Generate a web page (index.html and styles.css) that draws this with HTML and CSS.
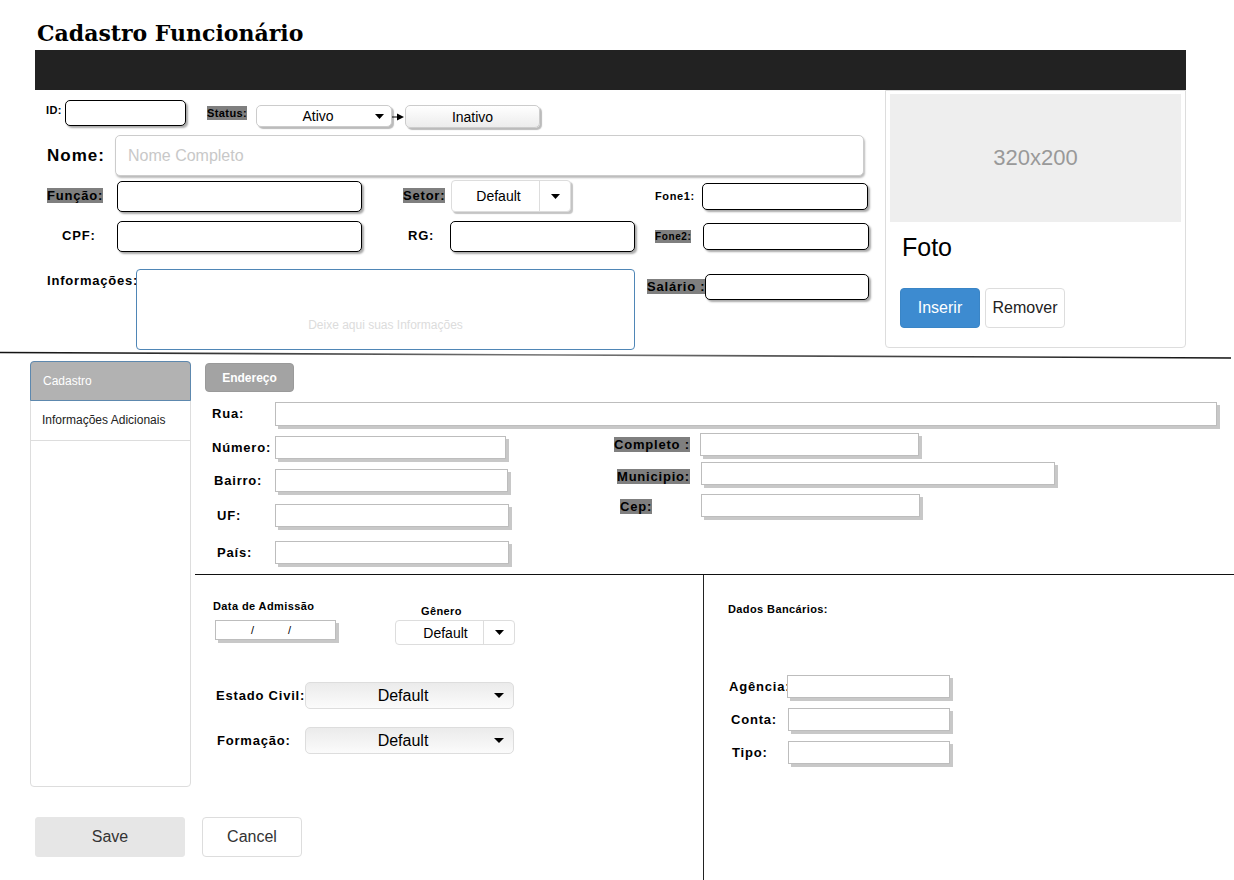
FILE: index.html
```html
<!DOCTYPE html>
<html lang="pt-BR">
<head>
<meta charset="utf-8">
<title>Cadastro Funcionário</title>
<link rel="stylesheet" href="styles.css">
</head>
<body>
<h1 class="title">Cadastro Funcionário</h1>
<div class="topbar"></div>

<div class="top">
  <form class="form">
    <div class="row r1">
      <label class="lb sm lb-id">ID:</label>
      <input class="bi in-id" type="text">
      <label class="lb sm lb-status"><span class="hl hl-tall">Status:</span></label>
      <div class="dd-ativo"><span class="dd-text">Ativo</span><svg class="caret" width="9" height="5" viewBox="0 0 9 5"><path d="M0 0h9L4.5 5z"/></svg></div>
      <svg class="conn" width="13" height="10" viewBox="0 0 13 10"><path d="M0 5h7" stroke="#000" stroke-width="1"/><path d="M5 1.5l7 3.5-7 3.5z" fill="#000"/></svg>
      <button type="button" class="btn-inativo">Inativo</button>
    </div>

    <div class="row r2">
      <label class="lb lb-nome">Nome:</label>
      <input class="in-nome" type="text" placeholder="Nome Completo">
    </div>

    <div class="row r3">
      <label class="lb md lb-funcao"><span class="hl">Função:</span></label>
      <input class="bi in-funcao" type="text">
      <label class="lb md lb-setor"><span class="hl">Setor:</span></label>
      <div class="dd-setor"><span class="dd-main">Default</span><span class="dd-btn"><svg class="caret" width="9" height="5" viewBox="0 0 9 5"><path d="M0 0h9L4.5 5z"/></svg></span></div>
      <label class="lb sm narrow lb-fone1">Fone1:</label>
      <input class="bi in-fone1" type="text">
    </div>

    <div class="row r4">
      <label class="lb md lb-cpf">CPF:</label>
      <input class="bi in-cpf" type="text">
      <label class="lb md lb-rg">RG:</label>
      <input class="bi in-rg" type="text">
      <label class="lb xs narrow lb-fone2"><span class="hl hl-tall">Fone2:</span></label>
      <input class="bi in-fone2" type="text">
    </div>

    <div class="row r5">
      <label class="lb md lb-info">Informações:</label>
      <textarea class="ta-info" placeholder="Deixe aqui suas Informações"></textarea>
      <label class="lb md lb-sal"><span class="hl">Salário :</span></label>
      <input class="bi in-sal" type="text">
    </div>
  </form>

  <aside class="card">
    <div class="ph">320x200</div>
    <div class="caption">Foto</div>
    <div class="card-btns">
      <button type="button" class="btn-ins">Inserir</button>
      <button type="button" class="btn-rem">Remover</button>
    </div>
  </aside>
</div>

<svg class="sep" width="1234" height="9" viewBox="0 0 1234 9">
  <defs>
    <linearGradient id="sepg" x1="0" x2="1" y1="0" y2="0">
      <stop offset="0" stop-color="#111"/>
      <stop offset="0.45" stop-color="#777"/>
      <stop offset="1" stop-color="#111"/>
    </linearGradient>
  </defs>
  <path d="M0 2.5L1231 8" stroke="url(#sepg)" stroke-width="1.6" fill="none"/>
</svg>

<div class="bottom">
  <div class="leftcol">
    <nav class="side">
      <div class="side-item active">Cadastro</div>
      <div class="side-item">Informações Adicionais</div>
    </nav>
    <div class="actions">
      <button type="button" class="btn-save">Save</button>
      <button type="button" class="btn-cancel">Cancel</button>
    </div>
  </div>

  <div class="content">
    <button type="button" class="tab">Endereço</button>

    <div class="row rua">
      <label class="lb md lb-rua">Rua:</label>
      <input class="wi in-rua" type="text">
    </div>

    <div class="addr">
      <div class="addr-l">
        <div class="row a-num">
          <label class="lb md lb-num">Número:</label>
          <input class="wi in-num" type="text">
        </div>
        <div class="row a-bai">
          <label class="lb md lb-bai">Bairro:</label>
          <input class="wi in-bai" type="text">
        </div>
        <div class="row a-uf">
          <label class="lb md lb-uf">UF:</label>
          <input class="wi in-uf" type="text">
        </div>
        <div class="row a-pais">
          <label class="lb md lb-pais">País:</label>
          <input class="wi in-pais" type="text">
        </div>
      </div>
      <div class="addr-r">
        <div class="row a-comp">
          <label class="lb md lb-comp"><span class="hl">Completo :</span></label>
          <input class="wi in-comp" type="text">
        </div>
        <div class="row a-mun">
          <label class="lb md lb-mun"><span class="hl">Municipio:</span></label>
          <input class="wi in-mun" type="text">
        </div>
        <div class="row a-cep">
          <label class="lb md lb-cep"><span class="hl">Cep:</span></label>
          <input class="wi in-cep" type="text">
        </div>
      </div>
    </div>

    <div class="lower">
      <div class="lower-l">
        <div class="row dg">
          <div class="g-data">
            <div class="lb sm">Data de Admissão</div>
            <div class="wi date"><span>/</span><span>/</span></div>
          </div>
          <div class="g-gen">
            <div class="lb sm lb-gen">Gênero</div>
            <div class="dd-gen"><span class="dd-main">Default</span><span class="dd-btn"><svg class="caret" width="9" height="5" viewBox="0 0 9 5"><path d="M0 0h9L4.5 5z"/></svg></span></div>
          </div>
        </div>
        <div class="row r-est">
          <label class="lb md lb-est">Estado Civil:</label>
          <div class="dd-wide"><span class="dd-text">Default</span><svg class="caret" width="10" height="5" viewBox="0 0 10 5"><path d="M0 0h10L5 5z"/></svg></div>
        </div>
        <div class="row r-form">
          <label class="lb md lb-form">Formação:</label>
          <div class="dd-wide"><span class="dd-text">Default</span><svg class="caret" width="10" height="5" viewBox="0 0 10 5"><path d="M0 0h10L5 5z"/></svg></div>
        </div>
      </div>

      <div class="lower-r">
        <div class="lb sm lb-banco">Dados Bancários:</div>
        <div class="row b-ag">
          <label class="lb md lb-ag">Agência:</label>
          <input class="wi in-ag" type="text">
        </div>
        <div class="row b-ct">
          <label class="lb md lb-ct">Conta:</label>
          <input class="wi in-ct" type="text">
        </div>
        <div class="row b-tp">
          <label class="lb md lb-tp">Tipo:</label>
          <input class="wi in-tp" type="text">
        </div>
      </div>
    </div>
  </div>
</div>
</body>
</html>
```

FILE: styles.css
```css
* { box-sizing: border-box; }

body {
  margin: 0;
  width: 1234px;
  height: 880px;
  overflow: hidden;
  background: #fff;
  color: #000;
  font-family: "Liberation Sans", Arial, sans-serif;
}

input, textarea, button {
  font-family: inherit;
  margin: 0;
  outline: none;
  flex: none;
  display: block;
}

/* ---------- header ---------- */
.title {
  margin: 0;
  padding: 23px 0 6px 37px;
  font: bold 22px/21px "DejaVu Serif", "Liberation Serif", serif;
  color: #000;
}

.topbar {
  margin-left: 35px;
  width: 1151px;
  height: 40px;
  background: #222;
}

/* ---------- generic ---------- */
.row { display: flex; align-items: center; }

.lb {
  flex: none;
  font-weight: bold;
  white-space: nowrap;
}
.sm { font-size: 11px; line-height: 13px; letter-spacing: .4px; }
.xs { font-size: 10px; line-height: 13px; letter-spacing: .3px; }
.md { font-size: 13px; line-height: 16px; letter-spacing: .8px; }
.narrow { font-family: "Liberation Sans Narrow", "Liberation Sans", Arial, sans-serif; letter-spacing: .6px; }
.hl { background: #7f7f7f; }
.hl-tall { padding: 1px 0; }

.bi {
  border: 1px solid #000;
  border-radius: 5px;
  box-shadow: 2px 2px 2px #aaa;
  background: #fff;
  padding: 0 6px;
  height: 31px;
}

.wi {
  border: 1px solid #bdbdbd;
  box-shadow: 3px 3px 0 #c8c8c8;
  background: #fff;
  padding: 0 4px;
  height: 23px;
}

.caret { display: block; flex: none; fill: #000; }

/* ---------- top section ---------- */
.top { display: flex; height: 260px; }
.form { width: 885px; flex: none; }

.r1 { margin-top: 10px; height: 28px; align-items: flex-start; }
.lb-id { margin: 4px 0 0 46px; width: 14px; }
.in-id { margin-left: 5px; width: 121px; height: 26px; }
.lb-status { margin: 7px 0 0 21px; width: 40px; }
.dd-ativo {
  margin: 5px 0 0 9px;
  width: 136px;
  height: 22px;
  flex: none;
  display: flex;
  align-items: center;
  border: 1px solid #ccc;
  border-radius: 5px;
  box-shadow: 2px 2px 1px #bbb;
  background: #fff;
  padding: 0 7px 0 0;
}
.dd-ativo .dd-text { flex: 1; text-align: center; font-size: 14px; padding-left: 4px; }
.conn { margin-top: 12px; flex: none; display: block; }
.btn-inativo {
  margin-top: 5px;
  width: 135px;
  height: 23px;
  border: 1px solid #ccc;
  border-radius: 5px;
  background: linear-gradient(#fff, #ececec);
  box-shadow: 2px 2px 1px #bbb;
  font-size: 14px;
  color: #000;
  padding: 0;
}

.r2 { margin-top: 7px; height: 41px; }
.lb-nome { margin-left: 47px; width: 68px; font-size: 17px; letter-spacing: 1px; }
.in-nome {
  width: 749px;
  height: 41px;
  border: 1px solid #ccc;
  border-radius: 5px;
  box-shadow: 1px 2px 2px #bbb;
  padding: 0 12px;
  font-size: 16px;
  background: #fff;
}
.in-nome::placeholder { color: #c8c8c8; }

.r3 { margin-top: 4px; height: 32px; }
.lb-funcao { margin-left: 47px; width: 56px; }
.in-funcao { margin-left: 14px; width: 245px; }
.lb-setor { margin-left: 41px; width: 43px; }
.dd-setor, .dd-gen {
  flex: none;
  display: flex;
  background: #fff;
  border: 1px solid #ddd;
  border-radius: 4px;
}
.dd-setor {
  margin-left: 5px;
  width: 120px;
  height: 32px;
  box-shadow: 2px 2px 1px #c4c4c4;
}
.dd-main {
  flex: 1;
  display: flex;
  align-items: center;
  justify-content: center;
  font-size: 14px;
  padding-left: 6px;
  border-right: 1px solid #ddd;
}
.dd-btn { width: 30px; display: flex; align-items: center; justify-content: center; }
.lb-fone1 { margin-left: 84px; width: 38px; }
.in-fone1 { margin-left: 9px; width: 166px; height: 27px; }

.r4 { margin-top: 8px; height: 32px; }
.lb-cpf { margin-left: 62px; width: 33px; }
.in-cpf { margin-left: 22px; width: 245px; }
.lb-rg { margin-left: 46px; width: 24px; }
.in-rg { margin-left: 18px; width: 185px; }
.lb-fone2 { margin-left: 20px; width: 38px; }
.in-fone2 { margin-left: 10px; width: 166px; height: 27px; }

.r5 { margin-top: 17px; height: 81px; align-items: flex-start; }
.lb-info { margin: 4px 0 0 47px; width: 89px; }
.ta-info {
  width: 499px;
  height: 81px;
  border: 1px solid #4f86b6;
  border-radius: 4px;
  resize: none;
  text-align: center;
  padding: 48px 8px 0;
  font-size: 12px;
  background: #fff;
}
.ta-info::placeholder { color: #dcdcdc; }
.lb-sal { margin: 10px 0 0 12px; width: 56px; }
.in-sal { margin: 5px 0 0 2px; width: 164px; height: 26px; }

/* photo card */
.card {
  width: 301px;
  height: 258px;
  flex: none;
  border: 1px solid #ddd;
  border-radius: 0 0 4px 4px;
  padding: 3px 4px 0;
}
.ph {
  height: 128px;
  background: #eee;
  color: #999;
  font-size: 22px;
  display: flex;
  align-items: center;
  justify-content: center;
}
.caption {
  margin-top: 10px;
  padding-left: 12px;
  font-size: 25px;
  line-height: 30px;
}
.card-btns { display: flex; gap: 5px; margin-top: 26px; padding-left: 10px; }
.btn-ins, .btn-rem {
  width: 80px;
  height: 40px;
  border-radius: 4px;
  font-size: 16px;
  padding: 0;
}
.btn-ins { background: #3d8bd0; border: 1px solid #3a85c6; color: #fff; }
.btn-rem { background: #fff; border: 1px solid #ddd; color: #222; }

.sep { display: block; }

/* ---------- bottom section ---------- */
.bottom { display: flex; height: 521px; }
.leftcol { width: 195px; flex: none; }

.side {
  margin: 2px 0 0 30px;
  width: 161px;
  height: 426px;
  border: 1px solid #ddd;
  border-radius: 4px;
}
.side-item {
  height: 40px;
  line-height: 39px;
  padding-left: 11px;
  font-size: 12px;
  color: #222;
  border-bottom: 1px solid #ddd;
  white-space: nowrap;
}
.side-item.active {
  background: #b2b2b2;
  color: #fff;
  border: 1px solid #5d88ae;
  border-radius: 4px 4px 0 0;
  margin: -1px -1px 0;
  height: 40px;
  line-height: 38px;
  padding-left: 12px;
}

.actions { display: flex; margin-top: 30px; padding-left: 35px; }
.btn-save, .btn-cancel { height: 40px; font-size: 16px; padding: 0; color: #333; }
.btn-save { width: 150px; background: #e6e6e6; border: 1px solid #e6e6e6; border-radius: 3px; }
.btn-cancel { margin-left: 17px; width: 100px; background: #fff; border: 1px solid #ddd; border-radius: 4px; }

.content { flex: 1; }

.tab {
  margin: 4px 0 0 10px;
  width: 89px;
  height: 29px;
  background: #a3a3a3;
  border: 1px solid #9a9a9a;
  border-radius: 4px;
  color: #fff;
  font-weight: bold;
  font-size: 12px;
  padding: 0;
}

.rua { margin-top: 10px; height: 24px; }
.lb-rua { margin-left: 17px; width: 63px; }
.in-rua { width: 942px; height: 24px; }

.addr { display: flex; height: 148px; }
.addr-l { width: 405px; flex: none; }
.addr-r { flex: 1; }

.a-num { margin-top: 10px; height: 23px; }
.lb-num { margin-left: 17px; width: 63px; }
.in-num { width: 231px; }
.a-bai { margin-top: 10px; height: 23px; }
.lb-bai { margin-left: 19px; width: 61px; }
.in-bai { width: 233px; }
.a-uf { margin-top: 12px; height: 23px; }
.lb-uf { margin-left: 22px; width: 58px; }
.in-uf { width: 234px; }
.a-pais { margin-top: 14px; height: 23px; }
.lb-pais { margin-left: 22px; width: 58px; }
.in-pais { width: 234px; }

.a-comp { margin-top: 7px; height: 23px; }
.lb-comp { margin-left: 14px; width: 86px; }
.in-comp { width: 219px; }
.a-mun { margin-top: 6px; height: 23px; }
.lb-mun { margin: 6px 0 0 17px; width: 84px; }
.in-mun { width: 354px; }
.a-cep { margin-top: 9px; height: 23px; }
.lb-cep { margin: 3px 0 0 20px; width: 81px; }
.in-cep { width: 219px; }

.lower { display: flex; height: 306px; border-top: 1px solid #111; }
.lower-l { width: 508px; flex: none; }
.lower-r { flex: 1; border-left: 1px solid #222; }

.dg { margin-top: 25px; align-items: flex-start; }
.g-data { margin-left: 18px; width: 124px; flex: none; }
.date {
  margin: 7px 0 0 2px;
  width: 121px;
  height: 20px;
  font-size: 11px;
  line-height: 18px;
  display: flex;
  padding-left: 35px;
  gap: 34px;
}
.g-gen { margin-left: 58px; flex: none; }
.lb-gen { margin: 5px 0 0 26px; }
.dd-gen { margin-top: 2px; width: 120px; height: 25px; }
.dd-gen .dd-main { padding-left: 12px; }

.r-est { margin-top: 37px; height: 27px; }
.lb-est { margin-left: 21px; width: 89px; }
.r-form { margin-top: 18px; height: 27px; }
.lb-form { margin-left: 22px; width: 88px; }
.dd-wide {
  width: 209px;
  height: 27px;
  flex: none;
  display: flex;
  align-items: center;
  border: 1px solid #ddd;
  border-radius: 5px;
  background: linear-gradient(#ebebeb, #fbfbfb);
  padding-right: 9px;
}
.dd-wide .dd-text { flex: 1; text-align: center; font-size: 16px; padding-left: 6px; }

.lb-banco { margin: 28px 0 0 24px; }
.b-ag { margin-top: 59px; height: 23px; }
.lb-ag { margin-left: 25px; width: 58px; }
.in-ag { width: 163px; }
.b-ct { margin-top: 10px; height: 23px; }
.lb-ct { margin-left: 27px; width: 57px; }
.in-ct { width: 162px; }
.b-tp { margin-top: 10px; height: 23px; }
.lb-tp { margin-left: 28px; width: 56px; }
.in-tp { width: 162px; }
```
